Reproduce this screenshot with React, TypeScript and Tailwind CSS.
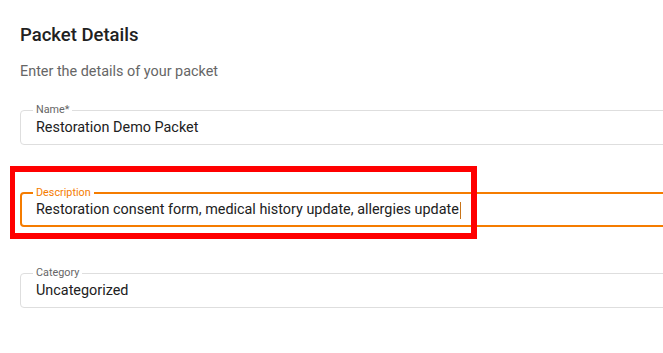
import React from "react";

function Field({
  label,
  value,
  focused = false,
  caret = false,
}: {
  label: string;
  value: string;
  focused?: boolean;
  caret?: boolean;
}) {
  return (
    <fieldset
      className={
        focused
          ? "w-[700px] rounded-[4px] border-2 border-[#f57c00] pl-[11px] pt-px pb-[5px]"
          : "w-[700px] rounded-[4px] border border-[#dedede] pl-[12px] pb-[6px] pt-[2px]"
      }
    >
      <legend
        className={
          focused
            ? "px-[3px] text-[10.8px] leading-[12px] text-[#f57c00]"
            : "px-[3px] text-[10.8px] leading-[12px] text-[#666666]"
        }
      >
        {label}
      </legend>
      <div className="flex items-center pl-[3px] text-[14.4px] leading-[20px] text-[#212121]">
        <span>{value}</span>
        {caret && <span className="ml-px h-[17px] w-px bg-[#c8741a]" />}
      </div>
    </fieldset>
  );
}

export default function App() {
  return (
    <div
      className="relative h-[353px] w-[663px] overflow-hidden bg-white pl-5 pt-[23px]"
      style={{ fontFamily: "Roboto, 'Liberation Sans', sans-serif" }}
    >
      <h1 className="text-[18.5px] font-medium leading-[24px] text-[#212121]">Packet Details</h1>
      <p className="mt-[15px] text-[14.4px] leading-[20px] text-[#666666]">
        Enter the details of your packet
      </p>
      <div className="mt-[22px]">
        <Field label="Name*" value="Restoration Demo Packet" />
      </div>
      <div className="mt-[42px]">
        <Field
          label="Description"
          value="Restoration consent form, medical history update, allergies update"
          focused
          caret
        />
      </div>
      <div className="mt-[40px]">
        <Field label="Category" value="Uncategorized" />
      </div>
      <div className="pointer-events-none absolute left-[10px] top-[166px] h-[73px] w-[467px] border-y-[6px] border-l-[5px] border-r-[6px] border-[#ff0000]" />
    </div>
  );
}
